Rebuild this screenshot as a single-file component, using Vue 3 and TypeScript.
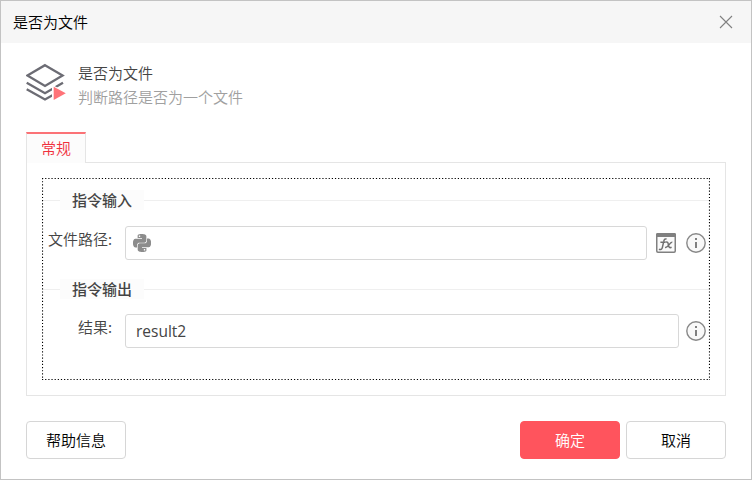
<script setup lang="ts">
import { ref } from 'vue'

const title = '是否为文件'
const filePath = ref('')
const result = ref('result2')
</script>

<template>
  <div class="dialog">
    <header class="titlebar">
      <span>{{ title }}</span>
      <svg class="close" width="14" height="14" viewBox="0 0 14 14"><path d="M1 1L13 13M13 1L1 13" /></svg>
    </header>

    <section class="intro">
      <svg class="layers" width="42" height="40" viewBox="0 0 42 40">
        <g class="sheets">
          <path d="M19 3.2L36.6 13.4L19 24L1.4 13.4Z" />
          <path d="M.7 20.7L19 31.2L37 20.7" />
          <path d="M.7 27.2L19 37.4L26.5 33.2" />
        </g>
        <path class="halo" d="M26 22.8V39.5L42 31Z" />
        <path class="play" d="M27.7 24.7V37.9L39.8 31.3Z" />
      </svg>
      <div>
        <div class="name">{{ title }}</div>
        <div class="desc">判断路径是否为一个文件</div>
      </div>
    </section>

    <div class="tab">常规</div>
    <main class="panel">
      <div class="focus">
        <svg class="outline" width="668" height="202"><path d="M0 .5H668M0 201.5H668M.5 0V202M667.5 0V202" /></svg>
        <div class="group"><span>指令输入</span></div>
        <div class="row first">
          <label for="path">文件路径:</label>
          <div class="field">
            <svg class="python" width="18" height="18" viewBox="0 0 24 24">
              <path d="M14.25.18l.9.2.73.26.59.3.45.32.34.34.25.34.16.33.1.3.04.26.02.2-.01.13V8.5l-.05.63-.13.55-.21.46-.26.38-.3.31-.33.25-.35.19-.35.14-.33.1-.3.07-.26.04-.21.02H8.77l-.69.05-.59.14-.5.22-.41.27-.33.32-.27.35-.2.36-.15.37-.1.35-.07.32-.04.27-.02.21v3.06H3.17l-.21-.03-.28-.07-.32-.12-.35-.18-.36-.26-.36-.36-.35-.46-.32-.59-.28-.73-.21-.88-.14-1.05-.05-1.23.06-1.22.16-1.04.24-.87.32-.71.36-.57.4-.44.42-.33.42-.24.4-.16.36-.1.32-.05.24-.01h.16l.06.01h8.16v-.83H6.18l-.01-2.75-.02-.37.05-.34.11-.31.17-.28.25-.26.31-.23.38-.2.44-.18.51-.15.58-.12.64-.1.71-.06.77-.04.84-.02 1.27.05zm-6.3 1.98l-.23.33-.08.41.08.41.23.34.33.22.41.09.41-.09.33-.22.23-.34.08-.41-.08-.41-.23-.33-.33-.22-.41-.09-.41.09zM21.1 6.11l.28.06.32.12.35.18.36.27.36.35.35.47.32.59.28.73.21.88.14 1.04.05 1.23-.06 1.23-.16 1.04-.24.86-.32.71-.36.57-.4.45-.42.33-.42.24-.4.16-.36.09-.32.05-.24.02-.16-.01h-8.22v.82h5.84l.01 2.76.02.36-.05.34-.11.31-.17.29-.25.25-.31.24-.38.2-.44.17-.51.15-.58.13-.64.09-.71.07-.77.04-.84.01-1.27-.04-1.07-.14-.9-.2-.73-.25-.59-.3-.45-.33-.34-.34-.25-.34-.16-.33-.1-.3-.04-.25-.02-.2.01-.13v-5.34l.05-.64.13-.54.21-.46.26-.38.3-.32.33-.24.35-.2.35-.14.33-.1.3-.06.26-.04.21-.02.13-.01h5.84l.69-.05.59-.14.5-.21.41-.28.33-.32.27-.35.2-.36.15-.36.1-.35.07-.32.04-.28.02-.21V6.07h2.09l.14.01zm-6.47 14.25l-.23.33-.08.41.08.41.23.33.33.23.41.08.41-.08.33-.23.23-.33.08-.41-.08-.41-.23-.33-.33-.23-.41-.08-.41.08z" />
            </svg>
            <input id="path" v-model="filePath">
          </div>
          <svg class="fx" width="20" height="20" viewBox="0 0 20 20">
            <rect class="frame" x=".75" y=".75" width="18.5" height="18.5" rx="1.2" />
            <path class="bar" d="M0 4V1.5Q0 0 1.5 0H18.5Q20 0 20 1.5V4Z" />
            <path class="sign" d="M10.6 6.2C9.3 5.5 8.2 6.2 7.8 8.2L6.4 14.3C6 16.2 4.6 17.1 2.9 16.3M4.4 9.2H9.6M9.8 9.2C11.4 8.4 12 9.5 12.3 11.3C12.7 13.9 13.4 15.3 15.6 14.3M16.3 9.2C13.6 8.5 12.5 15.3 9.1 14.3" />
          </svg>
          <svg class="info" width="20" height="20" viewBox="0 0 20 20"><circle cx="10" cy="10" r="9.2" /><path d="M9 5H11V7H9ZM9 9H11V15H9Z" /></svg>
        </div>
        <div class="group second"><span>指令输出</span></div>
        <div class="row">
          <label for="result">结果:</label>
          <div class="field"><input id="result" v-model="result"></div>
          <svg class="info" width="20" height="20" viewBox="0 0 20 20"><circle cx="10" cy="10" r="9.2" /><path d="M9 5H11V7H9ZM9 9H11V15H9Z" /></svg>
        </div>
      </div>
    </main>

    <footer class="actions">
      <button type="button">帮助信息</button>
      <button type="button" class="primary">确定</button>
      <button type="button">取消</button>
    </footer>
  </div>
</template>

<style>
body {
  margin: 0;
}
</style>

<style scoped>
.dialog {
  box-sizing: border-box;
  width: 752px;
  height: 480px;
  border: 1px solid #c3c3c3;
  background: #fff;
  font: 15px/20px "Noto Sans CJK SC", sans-serif;
  font-weight: 350;
  color: #444;
}
.titlebar {
  display: flex;
  align-items: center;
  justify-content: space-between;
  height: 42px;
  padding: 0 18px 0 12px;
  background: #f6f6f6;
  color: #000;
}
.close {
  fill: none;
  stroke: #808080;
  stroke-width: 1.1;
}
.intro {
  display: flex;
  gap: 10px;
  height: 69px;
  padding: 19px 25px 0;
  box-sizing: border-box;
  margin-bottom: 20px;
}
.sheets {
  fill: none;
  stroke: #6c6c74;
  stroke-width: 2.3;
}
.halo {
  fill: #fff;
}
.play {
  fill: #ff7378;
}
.name {
  line-height: 22px;
}
.desc {
  line-height: 26px;
  color: #a0a0a0;
}
.tab {
  position: relative;
  box-sizing: border-box;
  width: 60px;
  height: 31px;
  margin: 0 0 -1px 25px;
  border: solid #e5e5e5;
  border-width: 0 1px;
  border-top: 2px solid #fb7276;
  background: #fcfcfc;
  line-height: 28px;
  text-align: center;
  color: #f0303c;
}
.panel {
  box-sizing: border-box;
  width: 700px;
  height: 234px;
  margin-left: 25px;
  padding: 15px;
  border: 1px solid #e5e5e5;
}
.focus {
  position: relative;
  box-sizing: border-box;
  width: 668px;
  height: 202px;
  padding: 12px 1px 0;
}
.outline {
  position: absolute;
  top: 0;
  left: 0;
  fill: none;
  stroke: #000;
  stroke-width: 1.15;
  stroke-dasharray: 1.2 1.95;
}
.group {
  display: flex;
  align-items: center;
  height: 20px;
  font-weight: 500;
}
.group::before,
.group::after {
  content: "";
  width: 17px;
  height: 1px;
  background: #efefef;
}
.group::after {
  flex: 1;
}
.group span {
  box-sizing: border-box;
  width: 84px;
  padding-left: 12px;
  background: #fcfcfc;
}
.row {
  display: flex;
  align-items: center;
  height: 34px;
  margin-top: 15px;
  padding-right: 3px;
}
.row.first {
  margin-top: 16px;
}
.second {
  margin-top: 19px;
}
label {
  width: 69px;
  height: 28px;
  margin-right: 13px;
  text-align: right;
  white-space: nowrap;
}
.field {
  box-sizing: border-box;
  display: flex;
  align-items: center;
  flex: 1;
  height: 34px;
  border: 1px solid #d8d8d8;
  border-radius: 3px;
}
input {
  flex: 1;
  min-width: 0;
  padding: 0 10px;
  border: 0;
  outline: 0;
  background: none;
  font: 15.5px "Open Sans", "Noto Sans", sans-serif;
  color: #444;
}
.python {
  margin-left: 7px;
  fill: #8c8c8c;
}
.fx {
  margin-left: 9px;
}
.frame {
  fill: #fafafa;
  stroke: #808080;
  stroke-width: 1.5;
}
.bar {
  fill: #808080;
}
.sign {
  fill: none;
  stroke: #707070;
  stroke-width: 1.5;
}
.info {
  margin-left: 10px;
}
.row:not(.first) .info {
  margin-left: 7px;
}
.info circle {
  fill: #f9f9f9;
  stroke: #888;
  stroke-width: 1.4;
}
.info path {
  fill: #808080;
}
.actions {
  display: flex;
  gap: 6px;
  padding: 25px 25px 0;
}
button {
  box-sizing: border-box;
  width: 100px;
  height: 38px;
  padding: 0;
  border: 1px solid #d6d6d6;
  border-radius: 4px;
  background: #fff;
  font: inherit;
  color: #000;
}
.primary {
  margin-left: auto;
  border-color: #ff545d;
  background: #ff545d;
  color: #fff;
}
</style>
